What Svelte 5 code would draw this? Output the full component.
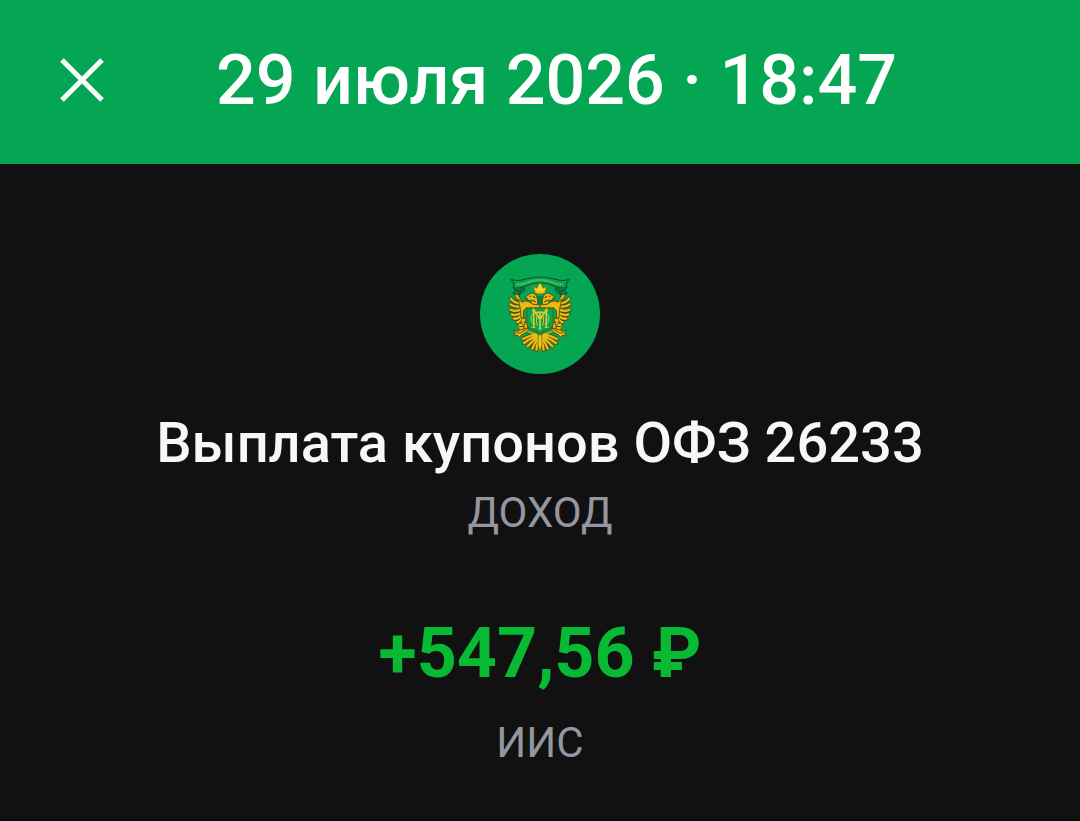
<script>
  const operation = {
    date: '29 июля 2026 · 18:47',
    title: 'Выплата купонов ОФЗ 26233',
    kind: 'ДОХОД',
    amount: '+547,56 ₽',
    account: 'ИИС'
  };
</script>

<div class="page">
  <header>
    <button class="close" type="button" aria-label="Закрыть">
      <svg viewBox="0 0 44 44" fill="none" stroke="currentColor" stroke-width="5">
        <path d="M2 2 42 42M42 2 2 42" />
      </svg>
    </button>
    <h1>{operation.date}</h1>
  </header>

  <main>
    <svg class="emblem" viewBox="15 15 360 360" aria-hidden="true">
      <defs>
        <path id="feathers" d="M136 158 125 140M134 163Q118 161 108 149M135 172Q118 175 106 166M137 182Q120 189 107 182M138 192Q124 201 110 196M139 200Q130 210 116 209M142 206Q138 217 127 220" fill="none" stroke-linecap="round" />
        <path id="tail" d="M184 256Q162 259 144 270M186 260Q164 269 147 282M188 264Q172 276 158 292M191 266Q179 282 172 299M194 266Q186 286 184 302" fill="none" stroke-linecap="round" />
        <g id="half" stroke="#4a4a10" stroke-width="2.6" stroke-linejoin="round">
          <!-- ribbon end -->
          <path d="M126 110 115 118 121 124 113 134 132 138 145 130 150 119 136 111Z" fill="#0a7f42" stroke="#064f2c" stroke-width="2.5" />
          <path d="M121 122 134 127 143 119M132 138 136 126" fill="none" stroke="#064f2c" stroke-width="3" />
          <!-- wing -->
          <use href="#feathers" stroke="#4a4a10" stroke-width="12" />
          <use href="#feathers" stroke="#eabb14" stroke-width="7" />
          <g fill="#eabb14">
            <path d="M130 150C137 157 141 162 148 157 157 153 164 162 181 166L195 168 195 177 153 177 145 186 146 205 138 207 136 180Z" />
            <!-- neck and head -->
            <path d="M187 167C190 154 186 145 182 137 174 130 162 133 157 141L148 148 159 149 154 156 166 153 171 165Z" />
            <path d="M174 142 181 147M169 153 182 158M164 142h4" fill="none" stroke="#51480f" stroke-width="3.4" />
            <!-- side flower and claw -->
            <path d="M145 207 137 215 140 221 131 223 128 233 134 243 145 247 156 241 158 229 151 219 153 211Z" />
            <path d="M138 222 148 230 145 244M147 217 150 227M132 233 147 232" fill="none" stroke="#51480f" stroke-width="3" />
            <path d="M134 243 126 247 115 243 121 252 116 261 128 259 132 266 140 257 155 250 163 240 156 238Z" />
            <path d="M124 252 137 251 155 241" fill="none" stroke="#51480f" stroke-width="2.6" />
          </g>
          <!-- tail fan -->
          <use href="#tail" stroke="#4a4a10" stroke-width="12" />
          <use href="#tail" stroke="#eabb14" stroke-width="7" />
          <path d="M160 246Q170 255 182 254" fill="none" stroke="#d6ad1c" stroke-width="4" />
        </g>
      </defs>
      <circle cx="195" cy="195" r="180" fill="#04a654" />
      <use href="#half" />
      <use href="#half" transform="translate(390 0) scale(-1 1)" />
      <!-- ribbon -->
      <path d="M108 91Q125 98 145 92 170 84 195 84 220 84 245 92 265 98 282 91L274 105 275 116Q258 119 240 112 218 102 195 102 172 102 150 112 132 119 115 116L117 105Z" fill="#08a554" stroke="#075b31" stroke-width="3.5" stroke-linejoin="round" />
      <path d="M124 106Q140 107 155 101 174 93 195 93 216 93 235 101 250 107 266 106" fill="none" stroke="#8bc640" stroke-width="5" stroke-dasharray="3 2" />
      <!-- crown -->
      <path d="M181 133 175 112 186 118 190 109 195 101 200 109 204 118 215 112 209 133Q195 137 181 133Z" fill="#ffd51c" stroke="#736512" stroke-width="2" />
      <path d="M182 128Q195 131 208 128" fill="none" stroke="#d89e16" stroke-width="2" />
      <path d="M186 142 190 155 188 165H202L200 155 204 142Z" fill="#087a40" />
      <!-- shield -->
      <path d="M156 177H234V224Q233 239 214 243 201 246 195 254 189 246 176 243 157 239 156 224Z" fill="#04a654" stroke="#5f5412" stroke-width="2.6" />
      <!-- monogram -->
      <g fill="none" stroke="#e8c824" stroke-width="5">
        <path d="M176 235V183L195 211 214 183V235M195 190V240M184 190H206" />
        <path d="M181 192C164 191 164 226 181 225M209 192C226 191 226 226 209 225M187 197Q181 216 187 230M203 197Q209 216 203 230" stroke-width="3" />
        <path d="M170 184H181M209 184H220M170 235H181M209 235H220M190 240H200" stroke-width="3" />
      </g>
      <path d="M190 260Q195 252 200 260L201 285 195 312 189 285Z" fill="#f1c719" stroke="#665e14" stroke-width="2" />
    </svg>

    <h2>{operation.title}</h2>
    <p class="note">{operation.kind}</p>
    <p class="amount">{operation.amount}</p>
    <p class="note">{operation.account}</p>
  </main>
</div>

<style>
  :global(body) {
    margin: 0;
    background: #111111;
  }

  .page {
    min-height: 100vh;
    box-sizing: border-box;
    border-bottom: 2px solid #0b090b;
    background: #111111;
    font-family: Roboto, sans-serif;
  }

  header {
    display: flex;
    align-items: center;
    gap: 112px;
    padding: 32px 60px 36px;
    background: #04a654;
    color: #ffffff;
  }

  .close {
    flex: none;
    display: flex;
    width: 44px;
    padding: 0;
    border: 0;
    background: none;
    color: inherit;
    cursor: pointer;
  }

  .close svg {
    width: 44px;
    height: 44px;
  }

  h1,
  h2,
  p {
    margin: 0;
  }

  h1 {
    font-size: 70px;
    line-height: 96px;
    font-weight: 500;
  }

  main {
    display: flex;
    flex-direction: column;
    align-items: center;
    padding: 90px 24px 40px;
    text-align: center;
  }

  .emblem {
    width: 120px;
    height: 120px;
    margin-bottom: 29px;
  }

  h2 {
    color: #f6f7f8;
    font-size: 56px;
    line-height: 80px;
    font-weight: 500;
  }

  .note {
    color: #9496a0;
    font-size: 42px;
    line-height: 60px;
  }

  .amount {
    margin: 62px 0 12px;
    color: #08b934;
    font-size: 70px;
    line-height: 96px;
    font-weight: 700;
  }
</style>
